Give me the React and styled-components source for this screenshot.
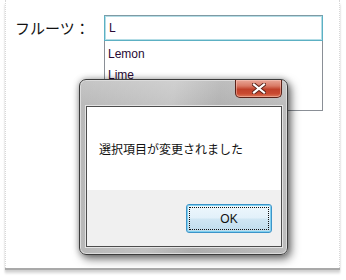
import React from "react";
import styled, { createGlobalStyle } from "styled-components";

const Global = createGlobalStyle`
  html, body { margin: 0; padding: 0; background: #ffffff; }
  body { width: 346px; height: 280px; overflow: hidden; font-family: "Liberation Sans", Arial, sans-serif; }
`;

const Frame = styled.div`
  position: relative;
  margin-left: 5px;
  width: 333px;
  height: 268px;
  background: #ffffff;
  border-left: 1px dotted #d8d8d8;
  border-right: 1px dotted #d8d8d8;
  box-shadow: 0 2px 0 #a9a9a9, 0 4px 2px #cfcfcf, 0 6px 2px #ececec;
  box-sizing: content-box;
`;

const Row = styled.div`
  display: flex;
  align-items: flex-start;
  padding: 15px 0 0 9px;
`;

const Label = styled.div`
  width: 89px;
  height: 26px;
  line-height: 25px;
  font-family: "Noto Sans CJK JP", sans-serif;
  font-size: 15px;
  color: #111;
`;

const Combo = styled.div`
  display: flex;
  flex-direction: column;
  width: 219px;
`;

const TextBox = styled.div`
  box-sizing: border-box;
  height: 26px;
  border: 1px solid #5cb0c3;
  border-top-color: #7f9aa4;
  box-shadow: inset 0 0 0 1px #b4dde6;
  padding-left: 4px;
  font-size: 12px;
  line-height: 24px;
  color: #2a0a35;
`;

const List = styled.div`
  box-sizing: border-box;
  height: 70px;
  border: 1px solid #8a8f96;
  border-top: none;
  padding-top: 3px;
  background: #fff;
`;

const Item = styled.div`
  height: 21px;
  line-height: 21px;
  padding-left: 3px;
  font-size: 12px;
  color: #2a0a35;
`;

const Dialog = styled.div`
  position: absolute;
  left: 73px;
  top: 79px;
  width: 209px;
  height: 176px;
  box-sizing: border-box;
  border: 1px solid #3c3c3c;
  border-radius: 7px;
  background:
    linear-gradient(100deg, rgba(255,255,255,0.0) 0%, rgba(255,255,255,0.18) 40%, rgba(0,0,0,0.04) 60%, rgba(255,255,255,0.12) 100%),
    linear-gradient(180deg, #c6c6c6 0%, #b9b9b9 15%, #b4b4b4 100%);
  box-shadow: inset 0 0 0 1px #dcdcdc, 3px 4px 10px rgba(0,0,0,0.55), 0 0 6px rgba(0,0,0,0.3);
  padding: 26px 5px 7px 6px;
`;

const CloseButton = styled.div`
  position: absolute;
  top: 0;
  right: 5px;
  width: 47px;
  height: 18px;
  box-sizing: border-box;
  border: 1px solid #5a2219;
  border-top: none;
  border-radius: 0 0 5px 5px;
  background: linear-gradient(180deg, #e9a799 0%, #d97a66 35%, #c0412b 55%, #c94a31 80%, #dc7a5c 100%);
  box-shadow: inset 0 0 0 1px rgba(255,210,200,0.45);
  display: flex;
  align-items: center;
  justify-content: center;
`;

const Client = styled.div`
  display: flex;
  flex-direction: column;
  height: 100%;
  box-sizing: border-box;
  border: 1px solid #4d4d4d;
  box-shadow: 0 0 0 1px #e4e4e4;
  background: #ffffff;
`;

const Body = styled.div`
  height: 83px;
  padding: 34px 0 0 12px;
  box-sizing: border-box;
  font-family: "Noto Sans CJK JP", sans-serif;
  font-size: 12px;
  line-height: 16px;
  color: #111;
`;

const Footer = styled.div`
  flex: 1;
  background: #f0f0f0;
  display: flex;
  justify-content: flex-end;
  align-items: flex-start;
  padding: 14px 9px 0 0;
`;

const OkButton = styled.div`
  width: 86px;
  height: 29px;
  box-sizing: border-box;
  border: 1px solid #3c94c9;
  border-radius: 3px;
  background: linear-gradient(180deg, #eef7fc 0%, #e2f1fa 48%, #cfe6f3 52%, #bfdcec 100%);
  box-shadow: inset 0 0 0 1px #7fd0f0;
  padding: 2px;
`;

const Focus = styled.div`
  height: 100%;
  box-sizing: border-box;
  border: 1px dotted #111;
  display: flex;
  align-items: center;
  justify-content: center;
  font-size: 12px;
  color: #111;
`;

export default function App() {
  return (
    <>
      <Global />
      <Frame>
        <Row>
          <Label>フルーツ：</Label>
          <Combo>
            <TextBox>L</TextBox>
            <List>
              <Item>Lemon</Item>
              <Item>Lime</Item>
            </List>
          </Combo>
        </Row>
        <Dialog>
          <CloseButton>
            <svg width="14" height="11" viewBox="0 0 14 11">
              <path d="M2 1.5 L12 9.5 M12 1.5 L2 9.5" stroke="#5b2118" strokeWidth="4" strokeLinecap="square" />
              <path d="M2 1.5 L12 9.5 M12 1.5 L2 9.5" stroke="#ffffff" strokeWidth="2.2" strokeLinecap="square" />
            </svg>
          </CloseButton>
          <Client>
            <Body>選択項目が変更されました</Body>
            <Footer>
              <OkButton>
                <Focus>OK</Focus>
              </OkButton>
            </Footer>
          </Client>
        </Dialog>
      </Frame>
    </>
  );
}
